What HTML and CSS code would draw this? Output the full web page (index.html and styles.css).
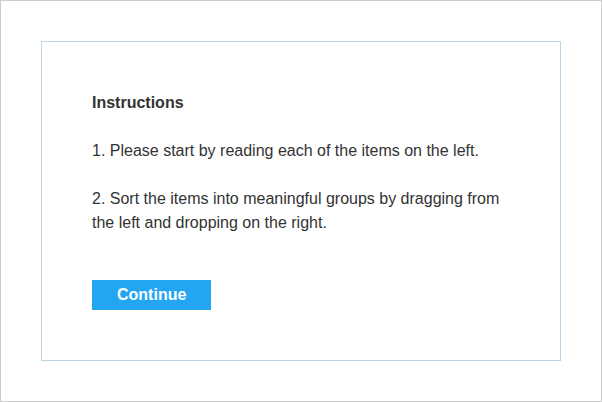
FILE: index.html
```html
<!doctype html>
<html lang="en">
  <head>
    <meta charset="UTF-8" />
    <title>Instructions</title>
    <link rel="stylesheet" href="styles.css">
  </head>
  <body>
    <div class="frame">
      <div class="panel">
        <h2 class="panel-title">Instructions</h2>
        <p>1. Please start by reading each of the items on the left.</p>
        <p>2. Sort the items into meaningful groups by dragging from the left and dropping on the right.</p>
        <button class="btn btn-primary" id="continueBtn">Continue</button>
      </div>
    </div>
  </body>
</html>
```

FILE: styles.css
```css
:root {
  --primary-color: #22a6f2;
  --panel-border: #b9d5e8;
  --frame-border: #cccccc;
  --text-color: #333;
}

* {
  margin: 0;
  padding: 0;
  box-sizing: border-box;
}

body {
  font-family: "Liberation Sans", Arial, Helvetica, sans-serif;
  color: var(--text-color);
  background-color: white;
  font-size: 16px;
  line-height: 24px;
}

.frame {
  width: 602px;
  height: 402px;
  border: 1px solid var(--frame-border);
  padding: 40px;
}

.panel {
  width: 520px;
  height: 320px;
  border: 1px solid var(--panel-border);
  padding: 49px 50px;
}

.panel-title {
  font-size: 16px;
  font-weight: 700;
  margin-bottom: 24px;
}

.panel p {
  margin-bottom: 24px;
}

.btn {
  display: block;
  height: 30px;
  margin-top: 45px;
  padding: 0 25px;
  border: none;
  font-family: inherit;
  font-size: 16px;
  font-weight: 700;
  line-height: 30px;
  cursor: pointer;
}

.btn-primary {
  background-color: var(--primary-color);
  color: white;
}
```
